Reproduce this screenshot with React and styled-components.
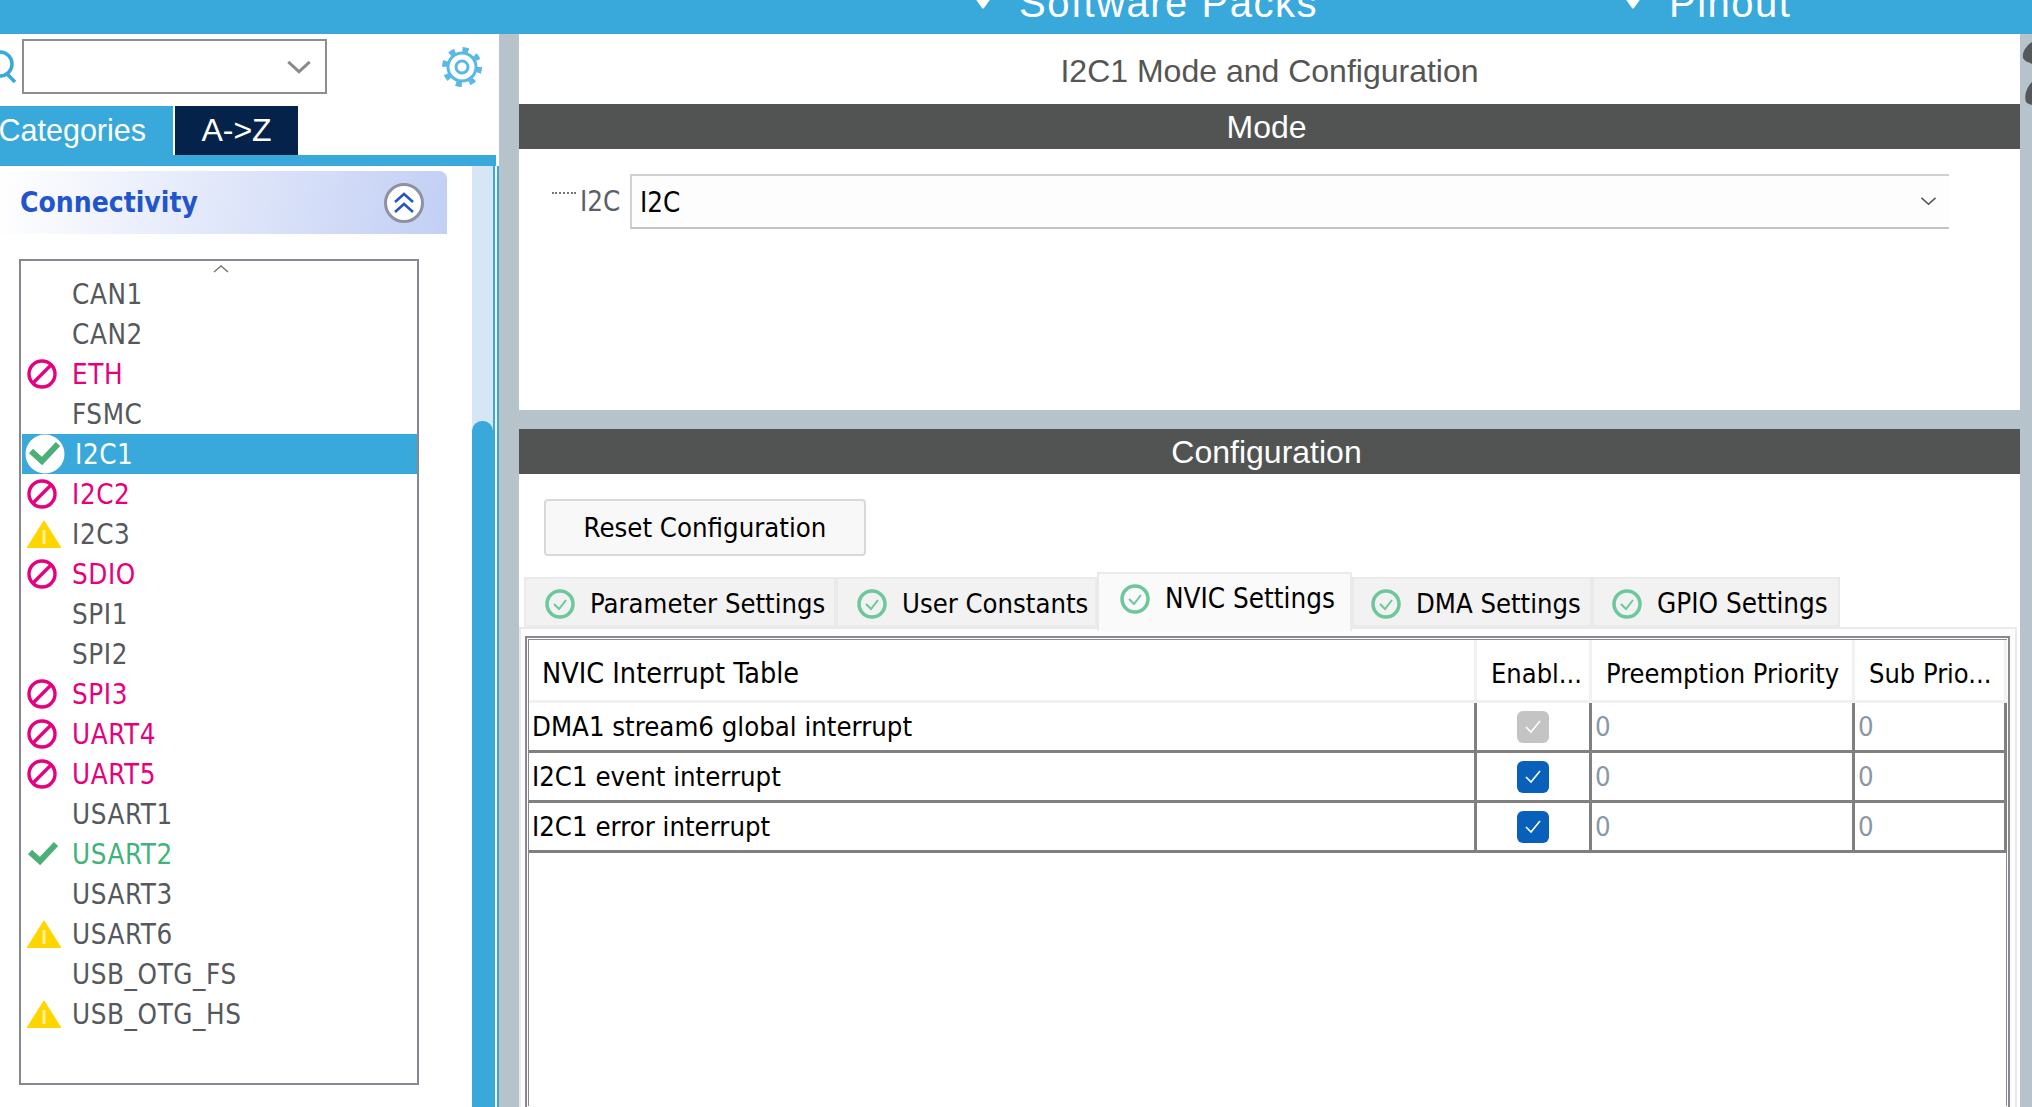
import React from 'react';
import styled, { createGlobalStyle } from 'styled-components';

const BLUE = '#39a9dc';
const GREY_STRIP = '#b6c3ca';
const TAHOMA_LIKE = '"DejaVu Sans Condensed", "DejaVu Sans", sans-serif';
const ARIAL_LIKE = '"Liberation Sans", Arial, sans-serif';

const GlobalStyle = createGlobalStyle`
  html, body {
    margin: 0;
    padding: 0;
    background: #fff;
  }
  * {
    box-sizing: border-box;
  }
`;

const Page = styled.div`
  display: flex;
  flex-direction: column;
  width: 2032px;
  height: 1107px;
  overflow: hidden;
  font-family: ${TAHOMA_LIKE};
`;

const TopBar = styled.div`
  display: flex;
  flex: none;
  align-items: flex-end;
  height: 34px;
  padding: 0 0 11px 973px;
  overflow: hidden;
  background: ${BLUE};
`;

const TopItem = styled.div`
  display: flex;
  flex: none;
  align-items: center;
  gap: 26px;
  width: ${props => props.$width}px;
  height: 40px;
  font-family: ${ARIAL_LIKE};
  font-size: 40px;
  letter-spacing: 1.5px;
  line-height: 40px;
  color: #fff;
`;

const MarkerIcon = styled.svg`
  flex: none;
  width: 20px;
  height: 14px;
  margin-top: 7px;
`;

const Main = styled.div`
  display: flex;
  flex: 1;
  min-height: 0;
`;

const Sidebar = styled.div`
  display: flex;
  flex: none;
  flex-direction: column;
  width: 499px;
  background: #fff;
`;

const SearchRow = styled.div`
  display: flex;
  flex: none;
  align-items: flex-start;
  height: 72px;
  padding-top: 5px;
`;

const SearchLens = styled.svg`
  flex: none;
  width: 22px;
  height: 50px;
`;

const Combo = styled.div`
  display: flex;
  align-items: center;
  justify-content: flex-end;
  width: 305px;
  height: 55px;
  padding-right: 13px;
  border: 2px solid #8b8e93;
`;

const GearIcon = styled.svg`
  flex: none;
  width: 42px;
  height: 42px;
  margin: 7px 0 0 114px;
`;

const SideTabs = styled.div`
  display: flex;
  flex: none;
  gap: 2px;
  height: 49px;
`;

const SideTab = styled.div`
  display: flex;
  align-items: center;
  justify-content: ${props => (props.$active ? 'flex-end' : 'center')};
  width: ${props => props.$width}px;
  padding-right: ${props => (props.$active ? 27 : 0)}px;
  font-family: ${ARIAL_LIKE};
  font-size: ${props => (props.$active ? 30.5 : 32)}px;
  color: #fff;
  white-space: nowrap;
  background: ${props => (props.$active ? BLUE : '#05234a')};
`;

const SideRule = styled.div`
  flex: none;
  width: 496px;
  height: 11px;
  background: ${BLUE};
`;

const SideBody = styled.div`
  display: flex;
  flex: 1;
  min-height: 0;
`;

const SideContent = styled.div`
  flex: none;
  width: 472px;
  padding-top: 5px;
`;

const GroupHeader = styled.div`
  display: flex;
  align-items: center;
  justify-content: space-between;
  width: 447px;
  height: 63px;
  padding: 0 23px 0 20px;
  font-size: 28px;
  font-weight: 700;
  color: #2255cc;
  background: linear-gradient(100deg, #fff 0%, #c2cff5 100%);
  border-top-right-radius: 8px;
`;

const ListBox = styled.div`
  width: 400px;
  height: 826px;
  margin: 25px 0 0 19px;
  padding: 1px 0 1px 1px;
  border: 2px solid #858891;
`;

const ListCaret = styled.div`
  display: flex;
  justify-content: center;
  height: 12px;
  padding: 3px 0 0 3px;
`;

const PeripheralRow = styled.div`
  display: flex;
  align-items: center;
  height: 40px;
  font-size: 27.5px;
  letter-spacing: 0.6px;
  color: ${props => props.$color};
  background: ${props => (props.$selected ? BLUE : 'transparent')};
`;

const IconSlot = styled.div`
  display: flex;
  flex: none;
  align-items: center;
  width: ${props => (props.$selected ? 53 : 50)}px;
  padding-left: ${props => (props.$selected ? 2 : 5)}px;
`;

const ScrollTrack = styled.div`
  display: flex;
  flex: none;
  width: 21px;
  padding-top: 255px;
  background: #d6e6f5;
`;

const ScrollThumb = styled.div`
  width: 100%;
  background: ${BLUE};
  border-radius: 10px 10px 0 0;
`;

const Rail = styled.div`
  flex: none;
  width: 6px;
  border-left: 2px solid ${BLUE};
  border-right: 2px solid ${BLUE};
  background: #fff;
`;

const GreyStrip = styled.div`
  flex: none;
  width: 20px;
  background: ${GREY_STRIP};
`;

const Panel = styled.div`
  display: flex;
  flex: none;
  flex-direction: column;
  width: 1501px;
  background: #fff;
`;

const PanelTitle = styled.div`
  display: flex;
  flex: none;
  align-items: center;
  justify-content: center;
  height: 70px;
  padding: 4px 0 0 0;
  font-family: ${ARIAL_LIKE};
  font-size: 32px;
  color: #555;
`;

const SectionBar = styled.div`
  flex: none;
  height: 45px;
  padding: 1px 6px 0 0;
  font-family: ${ARIAL_LIKE};
  font-size: 32px;
  line-height: 45px;
  text-align: center;
  color: #fff;
  background: #525453;
`;

const ModeBody = styled.div`
  display: flex;
  flex: none;
  align-items: flex-start;
  height: 261px;
  padding: 25px 0 0 33px;
`;

const TreeDots = styled.div`
  flex: none;
  width: 24px;
  height: 2px;
  margin: 18px 4px 0 0;
  border-top: 2px dotted #777;
`;

const ModeLabel = styled.div`
  flex: none;
  width: 50px;
  height: 55px;
  font-size: 27.5px;
  line-height: 55px;
  color: #5b6066;
`;

const ModeSelect = styled.div`
  display: flex;
  flex: none;
  align-items: center;
  justify-content: space-between;
  width: 1319px;
  height: 55px;
  padding: 0 12px 0 8px;
  font-size: 27.5px;
  color: #000;
  background: #fdfdfd;
  border-top: 2px solid #d0d0d0;
  border-bottom: 2px solid #c4c4c4;
  border-left: 2px solid #d0d0d0;
`;

const Separator = styled.div`
  flex: none;
  height: 19px;
  background: ${GREY_STRIP};
`;

const ConfigBody = styled.div`
  display: flex;
  flex: 1;
  flex-direction: column;
  min-height: 0;
`;

const ResetButton = styled.button`
  flex: none;
  width: 322px;
  height: 57px;
  margin: 25px 0 0 25px;
  padding: 0;
  font-family: ${TAHOMA_LIKE};
  font-size: 27.3px;
  color: #000;
  background: #f8f8f8;
  border: 2px solid #d8d8d8;
  border-radius: 4px;
`;

const TabBar = styled.div`
  display: flex;
  flex: none;
  align-items: flex-end;
  height: 55px;
  margin-top: 16px;
  padding-left: 5px;
`;

const Tab = styled.div`
  position: relative;
  z-index: ${props => (props.$active ? 2 : 1)};
  display: flex;
  flex: none;
  align-items: center;
  gap: 15px;
  width: ${props => props.$width}px;
  height: ${props => (props.$active ? 59 : 50)}px;
  margin-bottom: ${props => (props.$active ? -4 : 0)}px;
  padding: ${props => (props.$active ? '0 0 8px' : '3px 0 0')};
  padding-left: ${props => props.$pad}px;
  font-size: ${props => props.$size}px;
  color: #000;
  white-space: nowrap;
  background: ${props => (props.$active ? '#fafafa' : '#f2f2f2')};
  border: 2px solid #eaeaea;
  border-bottom: ${props => (props.$active ? 'none' : '2px solid #eaeaea')};
`;

const TabCheckIcon = styled.svg`
  flex: none;
  width: 30px;
  height: 30px;
`;

const TabFrame = styled.div`
  flex: 1;
  min-height: 0;
  width: 1498px;
  padding: 7px 5px 0 4px;
  background: #fcfcfc;
  border: 2px solid #eaeaea;
  border-bottom: none;
`;

const TableShell = styled.div`
  height: 100%;
  padding: 1px;
  background: #fff;
  border: 2px solid #86888d;
  border-bottom: none;
`;

const TableArea = styled.div`
  height: 100%;
  background: #fff;
  border: 1px solid #86888d;
  border-bottom: none;
`;

const TableGrid = styled.div`
  display: grid;
  grid-template-columns: 948px 115px 263px 152px;
  grid-template-rows: 63px 50px 50px 50px;
`;

const HeadCell = styled.div`
  display: flex;
  align-items: center;
  padding: 7px 0 0 ${props => props.$pad || 14}px;
  font-size: ${props => props.$size || 27}px;
  color: #000;
  white-space: nowrap;
  background: #fff;
  border-right: 3px solid #f1f1f1;
  border-bottom: 3px solid #f1f1f1;
`;

const BodyCell = styled.div`
  display: flex;
  align-items: center;
  justify-content: ${props => (props.$center ? 'center' : 'flex-start')};
  padding-left: ${props => (props.$center ? 0 : 3)}px;
  font-size: 27.3px;
  color: ${props => props.$color || '#000'};
  border-right: 3px solid #808080;
  border-bottom: 3px solid #808080;
`;

const CheckBox = styled.div`
  display: flex;
  align-items: center;
  justify-content: center;
  width: 32px;
  height: 32px;
  background: ${props => (props.$disabled ? '#c4c4c4' : '#0860bb')};
  border-radius: 6px;
`;

const RightEdge = styled.svg`
  flex: none;
  width: 12px;
  height: 100%;
  background: ${GREY_STRIP};
`;

const DownChevron = ({ size = 26, color = '#8a8a8a', width = 3 }) => (
  <svg width={size} height={size * 0.6} viewBox="0 0 26 16" fill="none">
    <path d="M2 3 L13 13 L24 3" stroke={color} strokeWidth={width} />
  </svg>
);

const TopMarker = () => (
  <MarkerIcon viewBox="0 0 20 14">
    <path d="M5 0 H15 L10 7 Z" fill="#fff" stroke="#fff" strokeWidth="3" strokeLinejoin="round" />
  </MarkerIcon>
);

const BanIcon = () => (
  <svg width="30" height="30" viewBox="0 0 30 30" fill="none" stroke="#e6007e" strokeWidth="3.4">
    <circle cx="15" cy="15" r="13" />
    <path d="M6 24 L24 6" />
  </svg>
);

const WarnIcon = () => (
  <svg width="34" height="28" viewBox="0 0 34 28">
    <path d="M17 0 L34 27 V28 H0 V27 Z" fill="#ffd500" />
    <rect x="15.5" y="10" width="3" height="14" fill="#ffef99" />
  </svg>
);

const CheckIcon = () => (
  <svg width="32" height="26" viewBox="0 0 32 26" fill="none">
    <path d="M3 11 L13 20 L29 3" stroke="#4caf78" strokeWidth="6" />
  </svg>
);

const SelectedCheckIcon = () => (
  <svg width="42" height="40" viewBox="0 0 42 40">
    <circle cx="21" cy="20" r="19.5" fill="#fff" />
    <path d="M7 17 L18 27 L34 10" fill="none" stroke="#4caf78" strokeWidth="6" />
  </svg>
);

const TabCheck = () => (
  <TabCheckIcon viewBox="0 0 30 30" fill="none">
    <circle cx="15" cy="15" r="13" stroke="#6cc79a" strokeWidth="3.5" />
    <path d="M9 15 L14 20 L21 11" stroke="#6cc79a" strokeWidth="2" />
  </TabCheckIcon>
);

const STATUS_ICONS = {
  ban: <BanIcon />,
  warn: <WarnIcon />,
  ok: <CheckIcon />,
  selected: <SelectedCheckIcon />,
};

const PERIPHERALS = [
  { name: 'CAN1' },
  { name: 'CAN2' },
  { name: 'ETH', status: 'ban' },
  { name: 'FSMC' },
  { name: 'I2C1', status: 'selected' },
  { name: 'I2C2', status: 'ban' },
  { name: 'I2C3', status: 'warn' },
  { name: 'SDIO', status: 'ban' },
  { name: 'SPI1' },
  { name: 'SPI2' },
  { name: 'SPI3', status: 'ban' },
  { name: 'UART4', status: 'ban' },
  { name: 'UART5', status: 'ban' },
  { name: 'USART1' },
  { name: 'USART2', status: 'ok' },
  { name: 'USART3' },
  { name: 'USART6', status: 'warn' },
  { name: 'USB_OTG_FS' },
  { name: 'USB_OTG_HS', status: 'warn' },
];

const ROW_COLORS = {
  ban: '#e6007e',
  ok: '#3fb37a',
  selected: '#fff',
};

const TABS = [
  { label: 'Parameter Settings', width: 312, pad: 19, size: 27.2 },
  { label: 'User Constants', width: 261, pad: 19, size: 27.2 },
  { label: 'NVIC Settings', width: 255, pad: 21, size: 27.6 },
  { label: 'DMA Settings', width: 240, pad: 17, size: 27.2 },
  { label: 'GPIO Settings', width: 248, pad: 18, size: 27.6 },
];

const INTERRUPTS = [
  { name: 'DMA1 stream6 global interrupt', disabled: true },
  { name: 'I2C1 event interrupt' },
  { name: 'I2C1 error interrupt' },
];

function App() {
  return (
    <Page>
      <GlobalStyle />
      <TopBar>
        <TopItem $width={650}>
          <TopMarker />
          Software Packs
        </TopItem>
        <TopItem $width={300}>
          <TopMarker />
          Pinout
        </TopItem>
      </TopBar>
      <Main>
        <Sidebar>
          <SearchRow>
            <SearchLens viewBox="0 0 22 50" fill="none" stroke={BLUE} strokeWidth="3.5">
              <circle cx="0" cy="25" r="12" />
              <path d="M7 35 L15 43" />
            </SearchLens>
            <Combo>
              <DownChevron />
            </Combo>
            <GearIcon viewBox="0 0 42 42" fill="none" stroke="#5ab8e4">
              <circle cx="21" cy="21" r="6" strokeWidth="3" />
              <circle cx="21" cy="21" r="14" strokeWidth="3" />
              <circle cx="21" cy="21" r="17.5" strokeWidth="5" strokeDasharray="6 7.74" />
            </GearIcon>
          </SearchRow>
          <SideTabs>
            <SideTab $active $width={173}>Categories</SideTab>
            <SideTab $width={123}>A-&gt;Z</SideTab>
          </SideTabs>
          <SideRule />
          <SideBody>
            <SideContent>
              <GroupHeader>
                Connectivity
                <svg width="40" height="40" viewBox="0 0 40 40" fill="none">
                  <circle cx="20" cy="20" r="18.5" fill="#fff" stroke="#8d92a3" strokeWidth="3" />
                  <path d="M11 19 L20 11 L29 19 M11 29 L20 21 L29 29" stroke="#2255cc" strokeWidth="2.5" />
                </svg>
              </GroupHeader>
              <ListBox>
                <ListCaret>
                  <svg width="16" height="8" viewBox="0 0 16 8" fill="none">
                    <path d="M1 7 L8 1 L15 7" stroke="#777" strokeWidth="1.5" />
                  </svg>
                </ListCaret>
                {PERIPHERALS.map(item => (
                  <PeripheralRow
                    key={item.name}
                    $selected={item.status === 'selected'}
                    $color={ROW_COLORS[item.status] || '#55585c'}
                  >
                    <IconSlot $selected={item.status === 'selected'}>
                      {STATUS_ICONS[item.status]}
                    </IconSlot>
                    {item.name}
                  </PeripheralRow>
                ))}
              </ListBox>
            </SideContent>
            <ScrollTrack>
              <ScrollThumb />
            </ScrollTrack>
            <Rail />
          </SideBody>
        </Sidebar>
        <GreyStrip />
        <Panel>
          <PanelTitle>I2C1 Mode and Configuration</PanelTitle>
          <SectionBar>Mode</SectionBar>
          <ModeBody>
            <TreeDots />
            <ModeLabel>I2C</ModeLabel>
            <ModeSelect>
              I2C
              <DownChevron size={17} color="#555" width={2.5} />
            </ModeSelect>
          </ModeBody>
          <Separator />
          <SectionBar>Configuration</SectionBar>
          <ConfigBody>
            <ResetButton>Reset Configuration</ResetButton>
            <TabBar>
              {TABS.map(tab => (
                <Tab
                  key={tab.label}
                  $width={tab.width}
                  $pad={tab.pad}
                  $size={tab.size}
                  $active={tab.label === 'NVIC Settings'}
                >
                  <TabCheck />
                  {tab.label}
                </Tab>
              ))}
            </TabBar>
            <TabFrame>
              <TableShell>
                <TableArea>
                  <TableGrid>
                    <HeadCell $pad={13} $size={28.5}>NVIC Interrupt Table</HeadCell>
                    <HeadCell>Enabl...</HeadCell>
                    <HeadCell>Preemption Priority</HeadCell>
                    <HeadCell>Sub Prio...</HeadCell>
                    {INTERRUPTS.map(row => (
                      <React.Fragment key={row.name}>
                        <BodyCell>{row.name}</BodyCell>
                        <BodyCell $center>
                          <CheckBox $disabled={row.disabled}>
                            <svg width="18" height="16" viewBox="0 0 18 16" fill="none">
                              <path d="M2 8 L7 13 L16 2" stroke="#fff" strokeWidth="1.6" />
                            </svg>
                          </CheckBox>
                        </BodyCell>
                        <BodyCell $color="#8a97a5">0</BodyCell>
                        <BodyCell $color="#8a97a5">0</BodyCell>
                      </React.Fragment>
                    ))}
                  </TableGrid>
                </TableArea>
              </TableShell>
            </TabFrame>
          </ConfigBody>
        </Panel>
        <RightEdge viewBox="0 0 12 1073">
          <path d="M12 8 C6 12 2 18 3 24 C5 28 9 28 12 30 Z" fill="#55585a" />
          <path d="M12 48 C6 54 4 62 6 68 C8 70 10 70 12 71 Z" fill="#55585a" />
        </RightEdge>
      </Main>
    </Page>
  );
}

export default App;
